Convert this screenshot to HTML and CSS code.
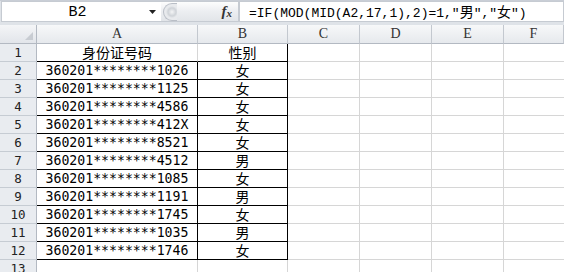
FILE: index.html
```html
<!DOCTYPE html>
<html>
<head>
<meta charset="utf-8">
<link rel="stylesheet" href="styles.css">
</head>
<body>
<div class="fbar">
  <div class="namebox"><span class="ref">B2</span><svg class="arrow" width="7" height="4" viewBox="0 0 7 4"><path d="M0 0H7L3.5 4Z" fill="#222"/></svg></div>
  <div class="fxzone"><span class="grip"></span><span class="fx">f<sub>x</sub></span></div>
  <div class="formula">=IF(MOD(MID(A2,17,1),2)=1,"<span class="cjk">男</span>","<span class="cjk">女</span>")</div>
</div>
<div class="sheet">
  <div class="corner"><svg width="8" height="8" viewBox="0 0 8 8"><path d="M8 0V8H0Z" fill="#c8ccd2"/></svg></div>
  <div class="ch">A</div><div class="ch">B</div><div class="ch">C</div><div class="ch">D</div><div class="ch">E</div><div class="ch">F</div>

  <div class="rh">1</div><div class="c a1 cjk">身份证号码</div><div class="c b1 cjk">性别</div><div class="c"></div><div class="c"></div><div class="c"></div><div class="c last"></div>
  <div class="rh">2</div><div class="c ba num">360201********1026</div><div class="c bb cjk">女</div><div class="c"></div><div class="c"></div><div class="c"></div><div class="c last"></div>
  <div class="rh">3</div><div class="c ba num">360201********1125</div><div class="c bb cjk">女</div><div class="c"></div><div class="c"></div><div class="c"></div><div class="c last"></div>
  <div class="rh">4</div><div class="c ba num">360201********4586</div><div class="c bb cjk">女</div><div class="c"></div><div class="c"></div><div class="c"></div><div class="c last"></div>
  <div class="rh">5</div><div class="c ba num">360201********412X</div><div class="c bb cjk">女</div><div class="c"></div><div class="c"></div><div class="c"></div><div class="c last"></div>
  <div class="rh">6</div><div class="c ba num">360201********8521</div><div class="c bb cjk">女</div><div class="c"></div><div class="c"></div><div class="c"></div><div class="c last"></div>
  <div class="rh">7</div><div class="c ba num">360201********4512</div><div class="c bb cjk">男</div><div class="c"></div><div class="c"></div><div class="c"></div><div class="c last"></div>
  <div class="rh">8</div><div class="c ba num">360201********1085</div><div class="c bb cjk">女</div><div class="c"></div><div class="c"></div><div class="c"></div><div class="c last"></div>
  <div class="rh">9</div><div class="c ba num">360201********1191</div><div class="c bb cjk">男</div><div class="c"></div><div class="c"></div><div class="c"></div><div class="c last"></div>
  <div class="rh">10</div><div class="c ba num">360201********1745</div><div class="c bb cjk">女</div><div class="c"></div><div class="c"></div><div class="c"></div><div class="c last"></div>
  <div class="rh">11</div><div class="c ba num">360201********1035</div><div class="c bb cjk">男</div><div class="c"></div><div class="c"></div><div class="c"></div><div class="c last"></div>
  <div class="rh">12</div><div class="c ba num">360201********1746</div><div class="c bb cjk">女</div><div class="c"></div><div class="c"></div><div class="c"></div><div class="c last"></div>
  <div class="rh">13</div><div class="c"></div><div class="c"></div><div class="c"></div><div class="c"></div><div class="c"></div><div class="c last"></div>
</div>
</body>
</html>
```
FILE: styles.css
```css
html, body {
  margin: 0;
  padding: 0;
  background: #fff;
  overflow: hidden;
}
body {
  width: 564px;
  height: 272px;
  font-family: "DejaVu Sans Mono", "Noto Sans CJK SC", monospace;
  color: #000;
}
.fbar {
  display: flex;
  height: 25px;
  box-sizing: border-box;
  background: #dfe3e8;
  border-top: 1px solid #c9ced6;
  padding: 0 0 3px 1px;
}
.namebox {
  width: 160px;
  display: flex;
  align-items: center;
  background: #fff;
  border: 1px solid #c6cbd2;
  border-right: none;
  box-sizing: border-box;
}
.ref {
  flex: 1;
  text-align: center;
  font-family: "Liberation Mono", monospace;
  font-size: 15px;
  padding-left: 4px;
  padding-top: 1px;
}
.arrow {
  margin-right: 5px;
}
.fxzone {
  width: 78px;
  display: flex;
  align-items: center;
  background: linear-gradient(#fdfdfd, #eceef1 50%, #e2e5e9);
  border: 1px solid #c6cbd2;
  border-left: none;
  box-sizing: border-box;
}
.grip {
  width: 14px;
  height: 18px;
  margin-left: 2px;
  border-radius: 9px 0 0 9px;
  border: 1px solid #b9bec6;
  border-right: none;
  background: radial-gradient(circle at 8px 8px, #f4f5f6 0, #cfd3d8 4px, #e8eaed 6px);
  box-sizing: border-box;
}
.fx {
  margin-left: auto;
  margin-right: 6px;
  font-family: "Liberation Serif", serif;
  font-style: italic;
  font-weight: bold;
  font-size: 15px;
  color: #333;
}
.fx sub {
  font-size: 11px;
  vertical-align: -1px;
}
.formula {
  flex: 1;
  background: #fff;
  border: 1px solid #c6cbd2;
  box-sizing: border-box;
  font-family: "Liberation Mono", monospace;
  font-size: 13px;
  line-height: 19px;
  padding-left: 9px;
  white-space: nowrap;
}
.formula .cjk {
  font-family: "Noto Sans CJK SC", sans-serif;
  font-size: 14px;
  line-height: 19px;
}
.sheet {
  display: grid;
  grid-template-columns: 37px 161px 90px 72px 72px 72px 1fr;
  grid-template-rows: 19px repeat(13, 18px);
}
.sheet > div {
  box-sizing: border-box;
}
.corner {
  background: linear-gradient(#f4f5f7, #e2e5ea);
  border-right: 1px solid #b3b9c2;
  border-bottom: 1px solid #b3b9c2;
  display: flex;
  align-items: flex-end;
  justify-content: flex-end;
  padding: 0 3px 3px 0;
}
.corner svg {
  display: block;
}
.ch {
  background: linear-gradient(#f7f8f9, #e6e9ed);
  border-right: 1px solid #c3c8cf;
  border-bottom: 1px solid #b3b9c2;
  text-align: center;
  font-family: "Liberation Serif", serif;
  font-size: 14px;
  line-height: 18px;
  color: #333;
}
.rh {
  background: #e9ecf0;
  border-right: 1px solid #b3b9c2;
  border-bottom: 1px solid #c6ccd3;
  text-align: center;
  font-family: "DejaVu Sans Mono", monospace;
  font-size: 12.5px;
  line-height: 17px;
  color: #222;
}
.c {
  border-right: 1px solid #d6d6d6;
  border-bottom: 1px solid #d6d6d6;
  text-align: center;
  white-space: nowrap;
  line-height: 17px;
}
.c.last {
  border-right: none;
}
.num {
  font-family: "DejaVu Sans Mono", monospace;
  font-size: 13.2px;
  line-height: 17px;
}
.cjk {
  font-family: "Noto Sans CJK SC", sans-serif;
  font-size: 14px;
  line-height: 17px;
}
.a1 {
  border-bottom-color: #000;
}
.b1 {
  border-bottom-color: #000;
  border-right-color: #000;
}
.ba, .bb {
  border-right-color: #000;
  border-bottom-color: #000;
}
```
